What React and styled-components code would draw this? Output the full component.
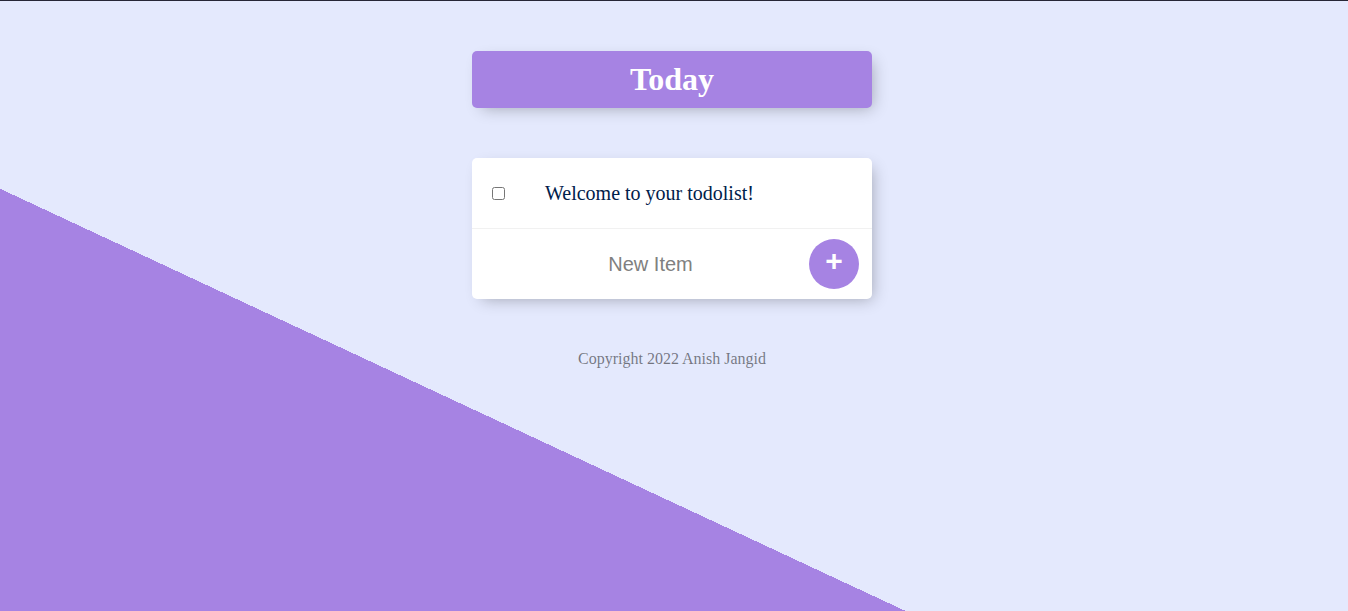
import React, { useState } from "react";
import styled, { createGlobalStyle } from "styled-components";

const GlobalStyle = createGlobalStyle`
    html, body {
        margin: 0;
        padding: 0;
        overflow: hidden;
    }

    body {
        font-family: "Liberation Serif", "Times New Roman", serif;
        border-top: 1px solid #262636;
    }
`;

const Page = styled.div`
    min-height: 1004px;
    background-color: #E4E9FD;
    background-image: linear-gradient(25deg, #A683E3 50%, #E4E9FD 50%);
    padding: 50px 4px 0 0;
    box-sizing: border-box;
`;

const Box = styled.div`
    max-width: 400px;
    margin: 0 auto 50px;
    background: ${props => props.heading ? "#A683E3" : "#FFF"};
    border-radius: 5px;
    box-shadow: 5px 5px 15px -5px rgba(0, 0, 0, 0.3);
    text-align: ${props => props.heading ? "center" : "left"};
`;

const Title = styled.h1`
    margin: 0;
    padding: 10px;
    color: #FFF;
    font-size: 32px;
    line-height: 37px;
    font-weight: bold;
`;

const Item = styled.div`
    min-height: 70px;
    display: flex;
    align-items: center;
    border-bottom: 1px solid #F1F1F1;

    &:last-child{
        border-bottom: 0;
    }
`;

const Check = styled.input`
    margin: 20px;
    width: 13px;
    height: 13px;
`;

const Text = styled.p`
    margin: 0;
    padding: 20px;
    font-size: 20px;
    font-weight: 200;
    color: #00204A;
    text-decoration: ${props => props.done ? "line-through" : "none"};
    text-decoration-color: #A683E3;
`;

const Form = styled.form`
    display: flex;
    align-items: center;
    margin-left: 20px;
`;

const TextInput = styled.input`
    box-sizing: border-box;
    width: 317px;
    height: 60px;
    padding: 1px 2px;
    border: none;
    text-align: center;
    font-family: "Liberation Sans", Arial, sans-serif;
    font-size: 20px;
    font-weight: 200;

    &::placeholder{
        color: grey;
        opacity: 1;
    }

    &:focus{
        outline: none;
        box-shadow: inset 0 -3px 0 0 #A683E3;
    }
`;

const AddButton = styled.button`
    width: 50px;
    height: 50px;
    border: 0;
    border-radius: 50%;
    background-color: #A683E3;
    color: #FFF;
    font-family: "Liberation Sans", Arial, sans-serif;
    font-size: 30px;
    font-weight: bold;
    line-height: 1;
    padding: 0 0 6px;
    cursor: pointer;
`;

const Footer = styled.footer`
    text-align: center;
    color: rgba(0, 0, 0, 0.5);
    font-size: 16px;
    line-height: 18px;
    padding-top: 1px;
`;

function App() {
    const [items, setItems] = useState([{ text: "Welcome to your todolist!", done: false }]);
    const [value, setValue] = useState("");

    const addItem = e => {
        e.preventDefault();
        if (!value.trim()) return;
        setItems(prev => [...prev, { text: value, done: false }]);
        setValue("");
    };

    return (
        <>
            <GlobalStyle />
            <Page>
                <Box heading>
                    <Title>Today</Title>
                </Box>
                <Box>
                    {items.map((item, i) => (
                        <Item key={i}>
                            <Check
                                type="checkbox"
                                checked={item.done}
                                onChange={() => setItems(prev => prev.map((it, j) => j === i ? { ...it, done: !it.done } : it))}
                            />
                            <Text done={item.done}>{item.text}</Text>
                        </Item>
                    ))}
                    <Item>
                        <Form onSubmit={addItem}>
                            <TextInput
                                type="text"
                                placeholder="New Item"
                                autoComplete="off"
                                value={value}
                                onChange={e => setValue(e.target.value)}
                            />
                            <AddButton type="submit">+</AddButton>
                        </Form>
                    </Item>
                </Box>
                <Footer>Copyright 2022 Anish Jangid</Footer>
            </Page>
        </>
    );
}

export default App;
